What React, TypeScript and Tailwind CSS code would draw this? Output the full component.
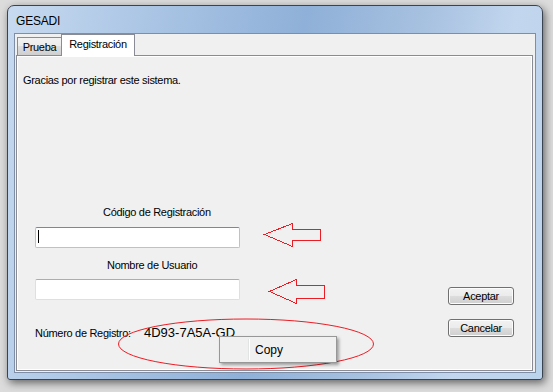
import React from "react";

const ui = { fontFamily: '"Liberation Sans", Arial, sans-serif' };

// botón estilo Windows 7
function WinButton({ label }: { label: string }) {
  return (
    <div className="h-[18px] w-[66px] rounded-[3px] border border-[#707070] bg-[linear-gradient(#f2f2f2_0%,#ebebeb_50%,#dddddd_50%,#cfcfcf_100%)] shadow-[inset_0_0_0_1px_#fcfcfc]">
      <div className="flex h-full items-center justify-center text-[11px] leading-none tracking-[-0.3px] text-black">
        {label}
      </div>
    </div>
  );
}

function TextBox({ focused }: { focused?: boolean }) {
  return (
    <div
      className={
        focused
          ? "relative h-[21px] w-[205px] rounded-[2px] border border-[#a4c9e8] border-t-[#5d8fc4] bg-white"
          : "relative h-[21px] w-[205px] rounded-[2px] border border-[#dbdfe6] border-t-[#abadb3] bg-white"
      }
    >
      {focused && <div className="absolute left-[2px] top-[2px] h-[13px] w-px bg-black" />}
    </div>
  );
}

export default function App() {
  return (
    <div className="relative h-[392px] w-[553px] overflow-hidden bg-[#dcdcdc]" style={ui}>
      <div className="ml-[7px] mt-[5px] flex h-[375px] w-[536px] flex-col rounded-t-[7px] rounded-b-[3px] border border-[#3a4350] bg-[linear-gradient(100deg,#c7daf0_0%,#a9c4e4_25%,#8fb0d8_50%,#a7c1e0_70%,#c2d6ee_85%,#bcd3ec_100%)] shadow-[2px_3px_8px_rgba(0,0,0,0.55)]">
        {/* barra de título */}
        <div className="flex h-[27px] shrink-0 items-center pl-[8px] pt-[2px] text-[12px] tracking-[-0.2px] text-black">
          GESADI
        </div>

        {/* área cliente */}
        <div className="mx-[6px] mb-[6px] flex flex-1 flex-col border border-[#7d8ea6] bg-[#f0f0f0] pl-px pr-[2px] pb-px">
          {/* pestañas */}
          <div className="flex h-[21px] items-end text-[11px] tracking-[-0.3px]">
            <div className="ml-px flex h-[18px] w-[45px] items-center justify-center border border-b-0 border-[#898c95] bg-[linear-gradient(#f2f2f2_0%,#ebebeb_50%,#dddddd_50%,#cfcfcf_100%)] pt-px text-black">
              Prueba
            </div>
            <div className="relative z-10 -mb-px -ml-px flex h-[22px] w-[74px] items-center justify-center border border-b-0 border-[#898c95] bg-white pb-[2px] text-black">
              Registración
            </div>
          </div>

          {/* panel */}
          <div className="flex-1 border border-[#898c95]">
            <div className="flex h-full border border-white">
              <div className="flex flex-1 flex-col text-[11px] leading-[13px] tracking-[-0.3px] text-black">
                <div className="ml-[5px] mt-[17px]">Gracias por registrar este sistema.</div>
                <div className="ml-[85px] mt-[119px]">Código de Registración</div>
                <div className="ml-[17px] mt-[8px]">
                  <TextBox focused />
                </div>
                <div className="ml-[89px] mt-[11px]">Nombre de Usuario</div>
                <div className="ml-[17px] mt-[7px]">
                  <TextBox />
                </div>
                <div className="ml-[17px] mt-[26px] flex items-baseline">
                  <span className="w-[109px]">Número de Registro:</span>
                  <span className="text-[13px] tracking-normal">4D93-7A5A-GD</span>
                </div>
              </div>
              <div className="mr-[17px] flex flex-col gap-[14px] pt-[230px]">
                <WinButton label="Aceptar" />
                <WinButton label="Cancelar" />
              </div>
            </div>
          </div>
        </div>
      </div>

      {/* anotaciones en rojo */}
      <svg className="pointer-events-none absolute left-0 top-0" width="553" height="392">
        <g fill="none" stroke="#ec1c24" strokeWidth="1" shapeRendering="crispEdges">
          <polygon points="264.5,234.5 292.5,223.5 292.5,229.5 320.5,229.5 320.5,240.5 292.5,240.5 292.5,246.5" />
          <polygon points="269.5,291.5 296.5,279.5 296.5,285.5 324.5,285.5 324.5,298.5 296.5,298.5 296.5,303.5" />
        </g>
        <ellipse cx="246" cy="344" rx="127.5" ry="25" fill="none" stroke="#ec1c24" strokeWidth="1" />
      </svg>

      {/* menú contextual */}
      <div className="absolute left-[219px] top-[336px] flex h-[27px] w-[118px] border border-[#979797] bg-[#f0f0f0] p-[2px] shadow-[2px_2px_3px_rgba(0,0,0,0.35)]">
        <div className="w-[27px] border-r border-r-[#e2e3e3] shadow-[1px_0_0_#ffffff]" />
        <div className="flex items-center pl-[6px] text-[12px] text-black">Copy</div>
      </div>
    </div>
  );
}
